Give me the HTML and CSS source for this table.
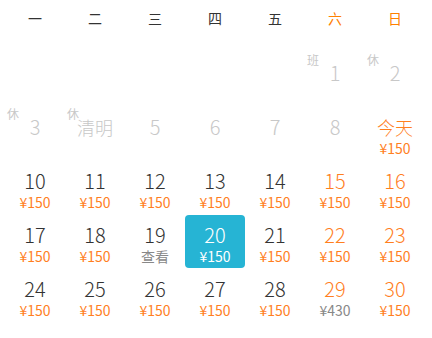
FILE: index.html
```html
<!DOCTYPE html>
<html lang="zh">
<head>
<meta charset="utf-8">
<link rel="stylesheet" href="styles.css">
</head>
<body>
<div class="cal">
  <div class="week">
    <div class="wd">一</div><div class="wd">二</div><div class="wd">三</div><div class="wd">四</div><div class="wd">五</div><div class="wd we">六</div><div class="wd we">日</div>
  </div>
  <div class="days">
    <div class="day"></div><div class="day"></div><div class="day"></div><div class="day"></div><div class="day"></div>
    <div class="day past"><span class="tag">班</span><div class="num">1</div></div>
    <div class="day past"><span class="tag">休</span><div class="num">2</div></div>

    <div class="day past"><span class="tag">休</span><div class="num">3</div></div>
    <div class="day past"><span class="tag">休</span><div class="num cn">清明</div></div>
    <div class="day past"><div class="num">5</div></div>
    <div class="day past"><div class="num">6</div></div>
    <div class="day past"><div class="num">7</div></div>
    <div class="day past"><div class="num">8</div></div>
    <div class="day wkend"><div class="num cn">今天</div><div class="price">¥150</div></div>

    <div class="day"><div class="num">10</div><div class="price">¥150</div></div>
    <div class="day"><div class="num">11</div><div class="price">¥150</div></div>
    <div class="day"><div class="num">12</div><div class="price">¥150</div></div>
    <div class="day"><div class="num">13</div><div class="price">¥150</div></div>
    <div class="day"><div class="num">14</div><div class="price">¥150</div></div>
    <div class="day wkend"><div class="num">15</div><div class="price">¥150</div></div>
    <div class="day wkend"><div class="num">16</div><div class="price">¥150</div></div>

    <div class="day"><div class="num">17</div><div class="price">¥150</div></div>
    <div class="day"><div class="num">18</div><div class="price">¥150</div></div>
    <div class="day"><div class="num">19</div><div class="price muted">查看</div></div>
    <div class="day selected"><div class="num">20</div><div class="price">¥150</div></div>
    <div class="day"><div class="num">21</div><div class="price">¥150</div></div>
    <div class="day wkend"><div class="num">22</div><div class="price">¥150</div></div>
    <div class="day wkend"><div class="num">23</div><div class="price">¥150</div></div>

    <div class="day"><div class="num">24</div><div class="price">¥150</div></div>
    <div class="day"><div class="num">25</div><div class="price">¥150</div></div>
    <div class="day"><div class="num">26</div><div class="price">¥150</div></div>
    <div class="day"><div class="num">27</div><div class="price">¥150</div></div>
    <div class="day"><div class="num">28</div><div class="price">¥150</div></div>
    <div class="day wkend"><div class="num">29</div><div class="price muted">¥430</div></div>
    <div class="day wkend"><div class="num">30</div><div class="price">¥150</div></div>
  </div>
</div>
</body>
</html>
```

FILE: styles.css
```css
html, body {
  margin: 0;
  padding: 0;
  background: #fff;
}
body {
  font-family: "Noto Sans CJK SC", "Noto Sans", sans-serif;
  width: 432px;
  height: 338px;
  overflow: hidden;
}
.cal {
  padding: 0 5px;
}
.week {
  display: grid;
  grid-template-columns: repeat(7, 60px);
  height: 36px;
  margin-bottom: 17px;
}
.wd {
  text-align: center;
  font-size: 14px;
  line-height: 36px;
  color: #333;
}
.wd.we {
  color: #ff8000;
}
.days {
  display: grid;
  grid-template-columns: repeat(7, 60px);
  grid-auto-rows: 53px;
  row-gap: 1px;
}
.day {
  position: relative;
  text-align: center;
  padding-top: 8px;
  box-sizing: border-box;
  border-radius: 4px;
  color: #333;
}
.num {
  font-size: 20px;
  line-height: 24px;
  font-weight: 300;
}
.num.cn {
  font-size: 18px;
}
.price {
  font-size: 14px;
  line-height: 18px;
  color: #ff7f1f;
}
.price.muted {
  color: #888;
}
.wkend .num {
  color: #ff7f1f;
}
.past .num {
  color: #c8c8c8;
}
.day.wkend .num.cn {
  color: #ff7f1f;
}
.tag {
  position: absolute;
  left: 2px;
  top: 0;
  font-size: 12px;
  line-height: 14px;
  color: #c8c8c8;
}
.selected {
  background: #26b4d4;
}
.selected .num,
.selected .price {
  color: #fff;
}
```
